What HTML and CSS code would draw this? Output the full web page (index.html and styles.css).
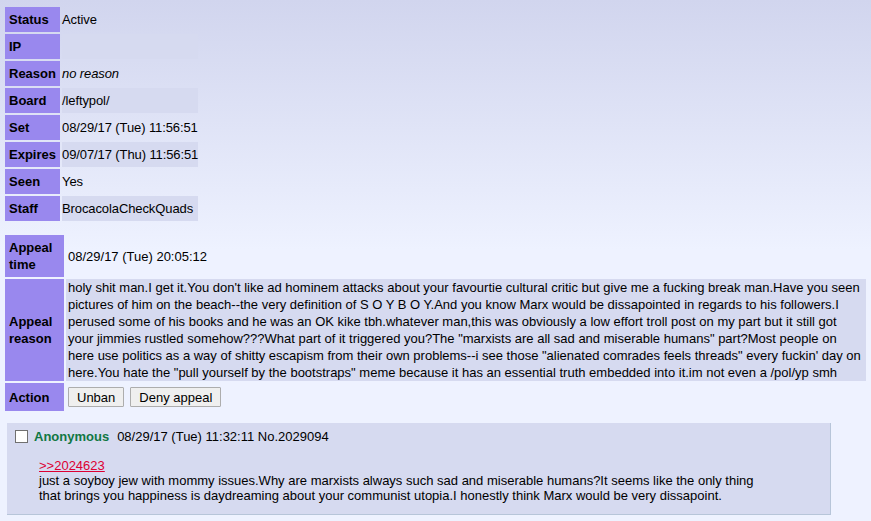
FILE: index.html
```html
<!DOCTYPE html>
<html lang="en">
<head>
  <meta charset="UTF-8">
  <title>Ban appeal</title>
  <link rel="stylesheet" href="styles.css">
</head>
<body>
  <table class="ban-info">
    <tr><th>Status</th><td>Active</td></tr>
    <tr><th>IP</th><td></td></tr>
    <tr><th>Reason</th><td><em>no reason</em></td></tr>
    <tr><th>Board</th><td>/leftypol/</td></tr>
    <tr><th>Set</th><td>08/29/17 (Tue) 11:56:51</td></tr>
    <tr><th>Expires</th><td>09/07/17 (Thu) 11:56:51</td></tr>
    <tr><th>Seen</th><td>Yes</td></tr>
    <tr><th>Staff</th><td>BrocacolaCheckQuads</td></tr>
  </table>

  <table class="appeal">
    <tr>
      <th>Appeal time</th>
      <td>08/29/17 (Tue) 20:05:12</td>
    </tr>
    <tr>
      <th>Appeal reason</th>
      <td class="reason">holy shit man.I get it.You don't like ad hominem attacks about your favourtie cultural critic but give me a fucking break man.Have you seen pictures of him on the beach--the very definition of S O Y B O Y.And you know Marx would be dissapointed in regards to his followers.I perused some of his books and he was an OK kike tbh.whatever man,this was obviously a low effort troll post on my part but it still got your jimmies rustled somehow???What part of it triggered you?The "marxists are all sad and miserable humans" part?Most people on here use politics as a way of shitty escapism from their own problems--i see those "alienated comrades feels threads" every fuckin' day on here.You hate the "pull yourself by the bootstraps" meme because it has an essential truth embedded into it.im not even a /pol/yp smh</td>
    </tr>
    <tr>
      <th>Action</th>
      <td>
        <div class="actions">
          <button class="btn">Unban</button>
          <button class="btn">Deny appeal</button>
        </div>
      </td>
    </tr>
  </table>

  <div class="post">
    <div class="intro">
      <input type="checkbox" class="post-check">
      <span class="name">Anonymous</span>
      <span class="time">08/29/17 (Tue) 11:32:11 No.2029094</span>
    </div>
    <div class="post-body">
      <a href="#" class="quote-link">&gt;&gt;2024623</a><br>
      just a soyboy jew with mommy issues.Why are marxists always such sad and miserable humans?It seems like the only thing that brings you happiness is daydreaming about your communist utopia.I honestly think Marx would be very dissapoint.
    </div>
  </div>
</body>
</html>
```

FILE: styles.css
```css
* {
  box-sizing: border-box;
}

body {
  margin: 0;
  padding: 5px 3px;
  font-family: 'Liberation Sans', Arial, sans-serif;
  font-size: 13px;
  color: #000;
  background: linear-gradient(#d1d5ee, #eef2ff 250px) #eef2ff;
  min-height: 521px;
}

table {
  border-spacing: 2px;
  border-collapse: separate;
}

th {
  background-color: #9988ee;
  text-align: left;
  font-weight: bold;
  padding: 4px 3px 4px 4px;
  line-height: 17px;
  vertical-align: middle;
}

td {
  padding: 4px 2px 4px 0;
  line-height: 17px;
  vertical-align: middle;
}

tr:nth-child(even) td {
  background-color: #d6daf0;
}

.ban-info th {
  width: 55px;
}

.ban-info td {
  min-width: 136px;
  padding-right: 0;
  white-space: nowrap;
  letter-spacing: -0.1px;
}

.appeal {
  margin-top: 10px;
}

.appeal th {
  width: 59px;
  min-width: 59px;
}

.appeal td {
  padding-left: 2px;
}

.appeal td.reason {
  padding: 0 2px;
}

.actions {
  display: flex;
  gap: 6px;
}

.btn {
  height: 20px;
  min-width: 56px;
  padding: 0 8px;
  font-family: 'Liberation Sans', Arial, sans-serif;
  font-size: 13px;
  color: #000;
  background-color: #efefef;
  border: 1px solid #adadad;
  border-radius: 1px;
}

.post {
  width: 824px;
  margin: 10px 0 0 4px;
  padding: 6px 66px 11px 8px;
  background-color: #d6daf0;
  border-right: 1px solid #b7c5d9;
  border-bottom: 1px solid #b7c5d9;
}

.intro {
  display: flex;
  align-items: center;
  line-height: 15px;
}

.post-check {
  appearance: none;
  width: 13px;
  height: 13px;
  margin: 0 6px 0 0;
  border: 1px solid #707070;
  background-color: #fff;
}

.name {
  color: #117743;
  font-weight: bold;
  margin-right: 8px;
}

.post-body {
  margin: 14px 0 0 24px;
  line-height: 15px;
}

.quote-link {
  color: #dd0033;
  text-decoration: underline;
}
```
